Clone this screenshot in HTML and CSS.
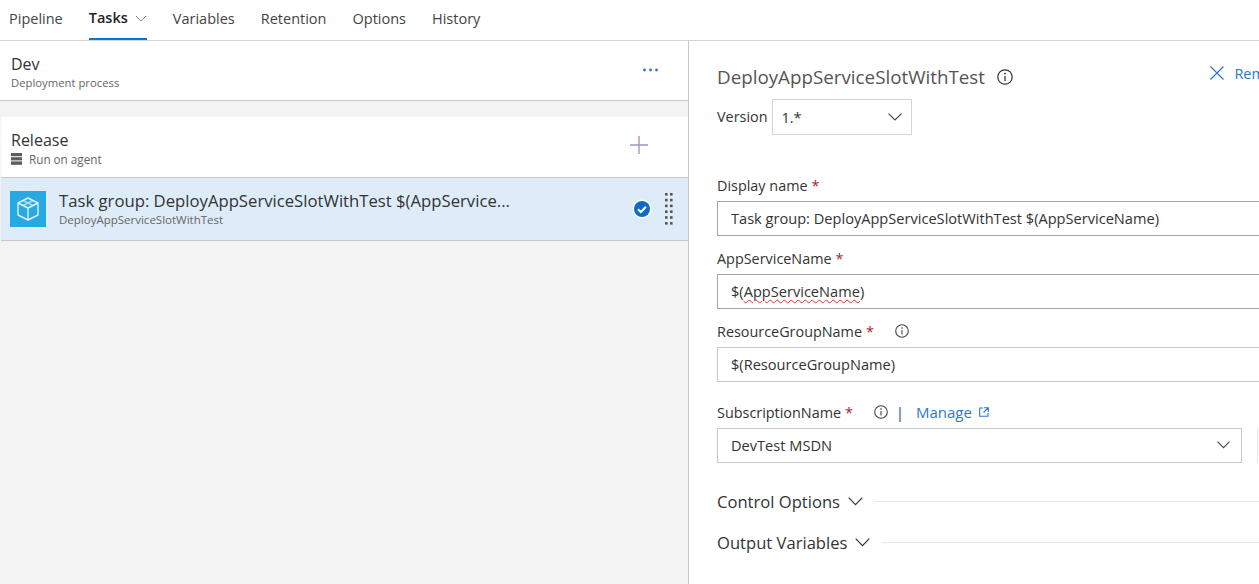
FILE: index.html
```html
<!DOCTYPE html>
<html lang="en">
<head>
    <meta charset="UTF-8">
    <title>Deployment process</title>
    <link rel="stylesheet" href="styles.css">
</head>
<body>
    <nav class="tabs">
        <a class="tab">Pipeline</a>
        <a class="tab tab-active">Tasks
            <svg class="tab-chevron" width="12" height="7" viewBox="0 0 12 7"><path d="M1 1l5 5 5-5" fill="none" stroke="#8a8886"/></svg>
        </a>
        <a class="tab">Variables</a>
        <a class="tab">Retention</a>
        <a class="tab">Options</a>
        <a class="tab">History</a>
    </nav>

    <div class="container">
        <section class="tasks-pane">
            <div class="stage-head">
                <div class="row-text">
                    <div class="row-title">Dev</div>
                    <div class="row-sub row-sub-small">Deployment process</div>
                </div>
                <svg class="more" width="15" height="4" viewBox="0 0 15 4"><g fill="#2b78d0"><circle cx="1.500" cy="2" r="1.400"/><circle cx="7.500" cy="2" r="1.400"/><circle cx="13.500" cy="2" r="1.400"/></g></svg>
            </div>

            <div class="phase">
                <div class="row-text">
                    <div class="row-title">Release</div>
                    <div class="row-sub">
                        <svg class="agent-icon" width="11" height="12" viewBox="0 0 11 12"><g fill="#5c5c5c"><rect width="11" height="3.2"/><rect y="4.2" width="11" height="3.2"/><rect y="8.4" width="11" height="3.4"/></g></svg>
                        Run on agent
                    </div>
                </div>
                <svg class="add" width="18" height="18" viewBox="0 0 18 18"><path d="M0 9h18" stroke="#8f8fc4" stroke-width="1.4"/><path d="M9 0v18" stroke="#b58fb8" stroke-width="1.4"/></svg>
            </div>

            <div class="task">
                <div class="task-icon">
                    <svg width="24" height="26" viewBox="0 0 24 26" fill="none" stroke="#e2f3fc" stroke-width="1.400" stroke-linejoin="round">
                        <path d="M12 2l10 5v12l-10 5-10-5V7z"/>
                        <path d="M2 7l10 5 10-5M12 12v12"/>
                        <path d="M7 4.5l10 5M17 4.5l-10 5" opacity=".7"/>
                    </svg>
                </div>
                <div class="task-text">
                    <div class="task-title">Task group: DeployAppServiceSlotWithTest $(AppService...</div>
                    <div class="task-sub">DeployAppServiceSlotWithTest</div>
                </div>
                <div class="check">
                    <svg width="20" height="20" viewBox="0 0 20 20"><circle cx="10" cy="10" r="9.5" fill="#fff"/><circle cx="10" cy="10" r="8" fill="#0f6cc4"/><path d="M6 10.3l2.8 2.7L14 7.8" fill="none" stroke="#fff" stroke-width="2"/></svg>
                </div>
                <svg class="grip" width="8" height="32" viewBox="0 0 8 32"><g fill="#555">
                    <rect width="2.600" height="2.600"/><rect x="5" width="2.600" height="2.600"/>
                    <rect y="5.800" width="2.600" height="2.600"/><rect x="5" y="5.800" width="2.600" height="2.600"/>
                    <rect y="11.600" width="2.600" height="2.600"/><rect x="5" y="11.600" width="2.600" height="2.600"/>
                    <rect y="17.400" width="2.600" height="2.600"/><rect x="5" y="17.400" width="2.600" height="2.600"/>
                    <rect y="23.200" width="2.600" height="2.600"/><rect x="5" y="23.200" width="2.600" height="2.600"/>
                    <rect y="29" width="2.600" height="2.600"/><rect x="5" y="29" width="2.600" height="2.600"/>
                </g></svg>
            </div>
        </section>

        <section class="details-pane">
            <div class="details-head">
                <h1 class="details-title">DeployAppServiceSlotWithTest</h1>
                <svg class="info info-large" width="16" height="16" viewBox="0 0 16 16"><circle cx="8" cy="8" r="7.2" fill="none" stroke="#333" stroke-width="1.2"/><path d="M8 7v5" stroke="#333" stroke-width="1.3"/><rect x="7.2" y="3.8" width="1.6" height="1.6" fill="#333"/></svg>
                <a class="remove">
                    <svg width="14" height="14" viewBox="0 0 14 14"><path d="M.5.5l13 13M13.500.5l-13 13" stroke="#2b78d0" stroke-width="1.2"/></svg>
                    Remove
                </a>
            </div>

            <div class="version-row">
                <label class="version-label">Version</label>
                <div class="version-select">
                    <span>1.*</span>
                    <svg width="14" height="8" viewBox="0 0 14 8"><path d="M.5.7L7 7l6.500-6.300" fill="none" stroke="#444" stroke-width="1.100"/></svg>
                </div>
            </div>

            <div class="field field-first">
                <label class="field-label">Display name <span class="req">*</span></label>
                <div class="input input-dark">Task group: DeployAppServiceSlotWithTest $(AppServiceName)</div>
            </div>

            <div class="field">
                <label class="field-label">AppServiceName <span class="req">*</span></label>
                <div class="input input-dark">$(<span class="misspelled">AppServiceName</span>)</div>
            </div>

            <div class="field">
                <label class="field-label">ResourceGroupName <span class="req">*</span>
                    <svg class="info info-gap" width="14" height="14" viewBox="0 0 14 14"><circle cx="7" cy="7" r="6.300" fill="none" stroke="#444" stroke-width="1.100"/><path d="M7 6v4.500" stroke="#444" stroke-width="1.100"/><rect x="6.300" y="3.300" width="1.400" height="1.400" fill="#444"/></svg>
                </label>
                <div class="input">$(ResourceGroupName)</div>
            </div>

            <div class="field field-sub">
                <label class="field-label">SubscriptionName <span class="req">*</span>
                    <svg class="info info-gap" width="14" height="14" viewBox="0 0 14 14"><circle cx="7" cy="7" r="6.300" fill="none" stroke="#444" stroke-width="1.100"/><path d="M7 6v4.500" stroke="#444" stroke-width="1.100"/><rect x="6.300" y="3.300" width="1.400" height="1.400" fill="#444"/></svg>
                    <span class="divider">|</span>
                    <a class="manage">Manage</a>
                    <svg class="manage-icon" width="10" height="10" viewBox="0 0 10 10"><path d="M4 1H.7v8.300H9V6M5 .7h4.300V5M9 1L4.500 5.500" fill="none" stroke="#2b78d0" stroke-width="1.100"/></svg>
                </label>
                <div class="sub-row">
                    <div class="input input-select">
                        <span>DevTest MSDN</span>
                        <svg width="13" height="8" viewBox="0 0 13 8"><path d="M.5.7l6 6 6-6" fill="none" stroke="#444" stroke-width="1.100"/></svg>
                    </div>
                    <div class="refresh-edge"></div>
                </div>
            </div>

            <div class="section-head section-first">
                <span>Control Options</span>
                <svg width="15" height="9" viewBox="0 0 15 9"><path d="M.7.7l6.800 7 6.800-7" fill="none" stroke="#333" stroke-width="1.200"/></svg>
                <div class="section-line"></div>
            </div>
            <div class="section-head">
                <span>Output Variables</span>
                <svg width="15" height="9" viewBox="0 0 15 9"><path d="M.7.7l6.800 7 6.800-7" fill="none" stroke="#333" stroke-width="1.200"/></svg>
                <div class="section-line"></div>
            </div>
        </section>
    </div>
</body>
</html>
```

FILE: styles.css
```css
html, body {
    margin: 0;
    height: 100%;
}

body {
    font-family: "Open Sans", "Noto Sans", "Liberation Sans", sans-serif;
    color: #333;
    background: #fff;
    overflow: hidden;
}

a {
    cursor: pointer;
}

/* top tabs */
.tabs {
    display: flex;
    height: 40px;
    padding-left: 9px;
    gap: 26px;
    border-bottom: 1px solid #d4d4d4;
}

.tab {
    display: flex;
    align-items: center;
    gap: 7px;
    box-sizing: border-box;
    height: 40px;
    padding-bottom: 3px;
    font-size: 14.5px;
    color: #444;
}

.tab-active {
    color: #222;
    font-weight: 600;
    border-bottom: 2px solid #0078d4;
}

.tab-chevron {
    margin-top: 1px;
}

.container {
    display: flex;
    height: 543px;
}

/* left pane */
.tasks-pane {
    width: 688px;
    flex-shrink: 0;
    background: #f3f3f3;
    border-right: 1px solid #c8c8c8;
}

.stage-head {
    display: flex;
    align-items: center;
    justify-content: space-between;
    height: 59px;
    padding: 0 31px 0 11px;
    background: #fff;
    border-bottom: 1px solid #c8c8c8;
}

.more {
    margin: 0 -1px 2px 0;
}

.row-text {
    padding-top: 2px;
}

.row-title {
    font-size: 16px;
    line-height: 22px;
    color: #333;
}

.row-sub {
    display: flex;
    align-items: center;
    gap: 7px;
    font-size: 11.7px;
    line-height: 16px;
    color: #666;
}

.row-sub-small {
    font-size: 11.3px;
}

.phase {
    display: flex;
    align-items: center;
    justify-content: space-between;
    height: 60px;
    margin: 16px 0 0 1px;
    padding: 0 40px 0 10px;
    background: #fff;
    border-bottom: 1px solid #c8c8c8;
}

.add {
    margin-bottom: 4px;
}

.task {
    display: flex;
    align-items: center;
    height: 62px;
    margin-left: 1px;
    background: #deecf9;
    border-bottom: 1px solid #c8c8c8;
}

.task-icon {
    display: flex;
    align-items: center;
    justify-content: center;
    width: 36px;
    height: 36px;
    margin-left: 9px;
    background: #27a9e3;
}

.task-text {
    flex: 1;
    margin-left: 13px;
}

.task-title {
    font-size: 16.7px;
    line-height: 22px;
    color: #333;
}

.task-sub {
    font-size: 11.5px;
    line-height: 16px;
    color: #666;
}

.check {
    display: flex;
    width: 20px;
    margin-right: 13px;
}

.grip {
    margin-right: 15px;
}

/* right pane */
.details-pane {
    flex: 1;
    min-width: 0;
    padding-left: 28px;
    overflow: hidden;
}

.details-head {
    display: flex;
    align-items: center;
    width: 572px;
    height: 28px;
    margin-top: 22px;
}

.details-title {
    margin: 0;
    font-size: 18.8px;
    font-weight: 400;
    line-height: 28px;
    color: #555;
}

.info-large {
    margin-left: 12px;
}

.remove {
    display: flex;
    align-items: center;
    gap: 10px;
    margin-left: auto;
    font-size: 14.5px;
    color: #2b78d0;
    white-space: nowrap;
    position: relative;
    top: -4px;
}

.version-row {
    display: flex;
    align-items: center;
    gap: 4px;
    margin-top: 8px;
}

.version-label {
    margin-bottom: 2px;
    font-size: 14.4px;
    color: #333;
}

.version-select {
    display: flex;
    align-items: center;
    justify-content: space-between;
    box-sizing: border-box;
    width: 140px;
    height: 36px;
    padding: 0 9px;
    border: 1px solid #d4d4d4;
    font-size: 14.5px;
}

.field {
    margin-top: 12px;
}

.field-first {
    margin-top: 40px;
}

.field-sub {
    margin-top: 20px;
}

.field-label {
    display: flex;
    align-items: center;
    gap: 4px;
    height: 20px;
    margin-bottom: 6px;
    font-size: 14.4px;
    color: #333;
}

.req {
    color: #a4262c;
}

.info-gap {
    margin-left: 17px;
}

.divider {
    margin: 0 8px 0 4px;
    color: #1b3a7a;
}

.manage {
    font-size: 15px;
    color: #2b78d0;
}

.manage-icon {
    margin-left: 3px;
}

.input {
    box-sizing: border-box;
    display: flex;
    align-items: center;
    width: 560px;
    height: 35px;
    padding: 0 0 1px 13px;
    border: 1px solid #c8c8c8;
    font-size: 14.6px;
    color: #333;
    white-space: pre;
}

.input-dark {
    border-color: #a6a6a6;
}

.misspelled {
    text-decoration: underline wavy #e03030 1px;
    text-underline-offset: 2px;
}

.sub-row {
    display: flex;
    gap: 15px;
}

.input-select {
    flex: none;
    justify-content: space-between;
    width: 525px;
    padding-right: 11px;
}

.refresh-edge {
    flex: none;
    width: 20px;
    height: 35px;
    box-sizing: border-box;
    border-left: 1px solid #e8e8e8;
}

.section-head {
    display: flex;
    align-items: center;
    gap: 8px;
    width: 560px;
    height: 24px;
    margin-top: 17px;
    font-size: 16.6px;
    color: #333;
}

.section-first {
    margin-top: 26px;
}

.section-line {
    flex: 1;
    height: 1px;
    margin-left: 3px;
    background: #e8e8e8;
}
```
